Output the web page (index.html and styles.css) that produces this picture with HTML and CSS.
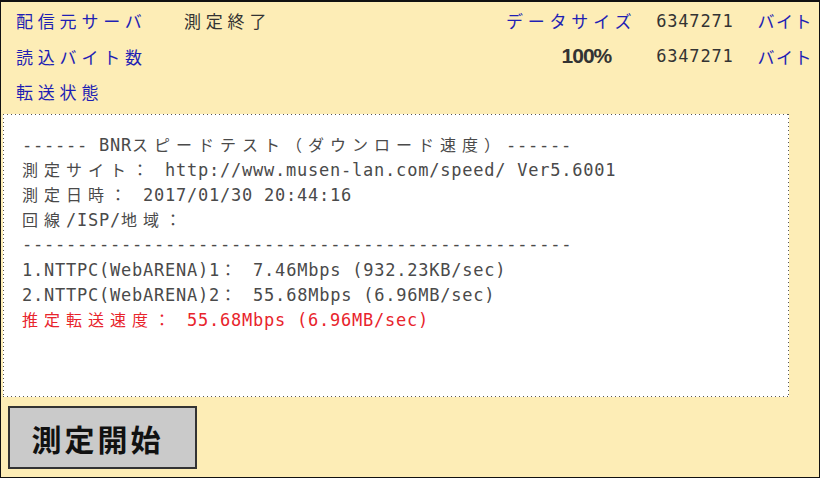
FILE: index.html
```html
<html lang="ja">
<head>
  <meta charset="UTF-8" />
  <title>BNRスピードテスト</title>
  <meta content="width=device-width, initial-scale=1" name="viewport" />
  <link rel="stylesheet" href="styles.css">
</head>
<body>
<div class="frame">
  <div class="status_grid">
    <span class="label">配信元サーバ</span>
    <span class="state">測定終了</span>
    <span class="label right_label">データサイズ</span>
    <span class="num">6347271</span>
    <span class="label unit">バイト</span>

    <span class="label">読込バイト数</span>
    <span class="state"></span>
    <span class="percent">100%</span>
    <span class="num">6347271</span>
    <span class="label unit">バイト</span>

    <span class="label">転送状態</span>
  </div>

  <div class="log">
    <div class="line">------ BNR<span class="j">スピードテスト（ダウンロード速度）</span>------</div>
    <div class="line"><span class="j">測定サイト：</span> http://www.musen-lan.com/speed/ Ver5.6001</div>
    <div class="line"><span class="j">測定日時：</span> 2017/01/30 20:44:16</div>
    <div class="line"><span class="j">回線</span>/ISP/<span class="j">地域：</span></div>
    <div class="line">--------------------------------------------------</div>
    <div class="line">1.NTTPC(WebARENA)1<span class="j">：</span> 7.46Mbps (932.23KB/sec)</div>
    <div class="line">2.NTTPC(WebARENA)2<span class="j">：</span> 55.68Mbps (6.96MB/sec)</div>
    <div class="line result"><span class="j">推定転送速度：</span> 55.68Mbps (6.96MB/sec)</div>
  </div>

  <div class="actions">
    <button class="start_btn" type="button">測定開始</button>
  </div>
</div>
</body>
</html>
```

FILE: styles.css
```css
*{box-sizing:border-box; margin:0; padding:0;}
body{width:821px; height:480px; background:#fff; overflow:hidden;
     font-family:"Noto Sans CJK JP", sans-serif;}

.frame{width:820px; height:478px; border:1px solid #111; border-top-width:2px;
       background-color:#fdedb6; display:flex; flex-direction:column;}

/* top status rows */
.status_grid{display:grid; grid-template-columns:168px 1fr auto auto auto;
             grid-auto-rows:35.5px; align-items:center; flex-shrink:0;
             padding:1px 6px 0 15px; height:110px;}
.label{color:#1f1fb4; font-size:17px; letter-spacing:4.8px; white-space:nowrap;}
.state{color:#333; font-size:17px; letter-spacing:4.8px;}
.right_label{margin-right:20px;}
.percent{font-family:"Liberation Sans", sans-serif; font-weight:bold; font-size:21px;
         color:#333; justify-self:end; margin-right:45px; letter-spacing:-1px;}
.num{font-family:"DejaVu Sans Mono", monospace; font-size:17px; color:#333;
     letter-spacing:0.8px; margin-right:24px;}
.unit{letter-spacing:1.5px;}

/* result box with dotted edge */
.log{margin:2px 30px 0 2px; height:283px; padding:18px 0 0 19px; flex-shrink:0;
     font-family:"DejaVu Sans Mono", "Noto Sans CJK JP", monospace; font-size:17px;
     letter-spacing:0.77px; color:#4a4a4a;
     background:
       repeating-linear-gradient(to right, #555 0 1px, transparent 1px 4px) top left / 100% 1px no-repeat,
       repeating-linear-gradient(to right, #555 0 1px, transparent 1px 4px) bottom left / 100% 1px no-repeat,
       repeating-linear-gradient(to bottom, #555 0 1px, transparent 1px 4px) top left / 1px 100% no-repeat,
       repeating-linear-gradient(to bottom, #555 0 1px, transparent 1px 4px) top right / 1px 100% no-repeat,
       #fff;}
.line{height:25px; line-height:25px; white-space:pre;}
.j{font-family:"Noto Sans CJK JP", sans-serif; font-size:16px; letter-spacing:6px;}
.result{color:#e8242c;}

.actions{padding:9px 0 0 7px;}
.start_btn{width:189px; height:63px; background:#cacaca; border:2px solid #333;
           font-family:"Noto Sans CJK JP", sans-serif; font-weight:bold; font-size:30px;
           letter-spacing:3px; color:#111; padding:0 10px 0 0;}
```
